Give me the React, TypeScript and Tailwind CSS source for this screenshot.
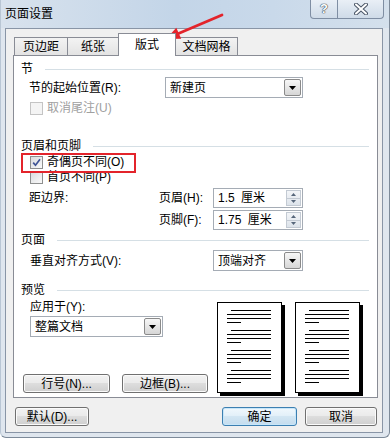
import React from 'react';

const Tri = () => (
  <svg width="7" height="4" viewBox="0 0 7 4">
    <path d="M0 0h7L3.5 4z" fill="#000" />
  </svg>
);

function Select({ value, className }: { value: string; className: string }) {
  return (
    <div className={`flex h-[21px] items-center border border-[#a5acb5] bg-white pl-[4px] pr-[1px] ${className}`}>
      <span className="flex-1 leading-[14px]">{value}</span>
      <span className="flex h-[17px] w-[17px] items-center justify-center rounded-[2px] border border-[#8a8a8a] bg-[linear-gradient(#f7f7f7,#d6d6d6)]">
        <Tri />
      </span>
    </div>
  );
}

function Spin({ value }: { value: string }) {
  return (
    <div className="flex h-[20px] w-[90px] items-center border border-[#a5acb5] bg-white pl-[4px] pr-[1px]">
      <span className="flex-1 leading-[14px] [word-spacing:3px]">{value}</span>
      <span className="flex h-[16px] w-[15px] flex-col border border-[#c3cad3] bg-[linear-gradient(#f3f5f8,#dde3ea)]">
        <span className="flex flex-1 items-center justify-center border-b border-[#c3cad3]">
          <svg width="5" height="3" viewBox="0 0 5 3"><path d="M0 3h5L2.5 0z" fill="#56667a" /></svg>
        </span>
        <span className="flex flex-1 items-center justify-center">
          <svg width="5" height="3" viewBox="0 0 5 3"><path d="M0 0h5L2.5 3z" fill="#56667a" /></svg>
        </span>
      </span>
    </div>
  );
}

function Btn({ children, className, primary }: { children: React.ReactNode; className: string; primary?: boolean }) {
  return (
    <div
      className={`flex h-[19px] items-center justify-center rounded-[3px] border leading-[14px] ${
        primary
          ? 'border-[#3c7fb1] bg-[linear-gradient(#f1f8fd_0%,#e3f0f9_45%,#d3e6f3_50%,#c4dcee_100%)] shadow-[inset_0_0_0_1px_#c7e6f9]'
          : 'border-[#707070] bg-[linear-gradient(#f2f2f2_0%,#ebebeb_45%,#dddddd_50%,#cfcfcf_100%)] shadow-[inset_0_0_0_1px_#fbfbfb]'
      } ${className}`}
    >
      {children}
    </div>
  );
}

function Box({ checked, disabled }: { checked?: boolean; disabled?: boolean }) {
  return (
    <span
      className={`flex h-[13px] w-[13px] shrink-0 items-center justify-center border ${
        disabled ? 'border-[#c4c4c4] bg-[#f4f4f4]' : 'border-[#8e8f8f] bg-[linear-gradient(135deg,#d9dbde,#fafafa)]'
      }`}
    >
      {checked && (
        <svg width="9" height="9" viewBox="0 0 9 9">
          <path d="M1.2 4.6l2.3 2.6L8 1.2" stroke="#3f5496" strokeWidth="1.7" fill="none" />
        </svg>
      )}
    </span>
  );
}

function Head({ label, labelClass, className }: { label: string; labelClass: string; className: string }) {
  return (
    <div className={`flex h-[14px] items-center pl-[7px] pr-[8px] ${className}`}>
      <span className={`leading-[14px] ${labelClass}`}>{label}</span>
      <span className="h-px flex-1 bg-[#d5dfe5]" />
    </div>
  );
}

function Page() {
  return (
    <div className="h-[91px] w-[65px] border border-black bg-white shadow-[3px_3px_0_#000]">
      <svg width="63" height="89" viewBox="0 0 63 89">
        {[0, 1, 2, 3].map((g) => (
          <g key={g} fill="#000">
            <rect x={13} y={7 + g * 20} width={40} height={1} />
            <rect x={9} y={11 + g * 20} width={44} height={1} />
            <rect x={9} y={15 + g * 20} width={44} height={1} />
            <rect x={9} y={19 + g * 20} width={14} height={1} />
          </g>
        ))}
      </svg>
    </div>
  );
}

export default function App() {
  return (
    <div className="relative h-[440px] w-[392px] bg-white font-['Liberation_Sans','Noto_Sans_CJK_SC',sans-serif] text-[12px] text-black">
      <div className="flex h-[438px] w-[390px] flex-col rounded-b-[6px] border border-t-0 border-[#7d8a99] border-l-[#b9c6d4] bg-[#dfe6ee]">
        {/* title bar */}
        <div className="flex h-[28px] bg-[linear-gradient(90deg,#d8e2ed_0%,#c3d5e8_45%,#c9d9ea_70%,#d4e0ec_100%)]">
          <span className="ml-[4px] mt-[7px] leading-[14px]">页面设置</span>
          <div className="ml-auto mr-[5px] flex self-start">
            <div className="flex h-[19px] w-[28px] items-center justify-center rounded-bl-[4px] border border-t-0 border-[#7f8ea3] bg-[linear-gradient(#e9eff6,#cfdbe8)] text-[13px] font-bold text-white [text-shadow:0_0_1px_#34404f,0_0_1px_#34404f,0_0_1px_#34404f]">
              ?
            </div>
            <div className="flex h-[19px] w-[46px] items-center justify-center rounded-br-[4px] border border-l-0 border-t-0 border-[#7f8ea3] bg-[linear-gradient(#e9eff6,#cfdbe8)]">
              <svg width="14" height="12" viewBox="0 0 14 12">
                <path d="M2 1.5L12 10.5M12 1.5L2 10.5" stroke="#4a5566" strokeWidth="4" strokeLinecap="round" />
                <path d="M2 1.5L12 10.5M12 1.5L2 10.5" stroke="#fff" strokeWidth="2" strokeLinecap="round" />
              </svg>
            </div>
          </div>
        </div>

        {/* client area */}
        <div className="ml-[4px] flex h-[405px] w-[378px] flex-col border border-[#8995a6] bg-[#f0f0f0]">
          {/* tabs */}
          <div className="ml-[7px] mt-[4px] flex h-[22px] items-end">
            <div className="ml-[1px] flex h-[18px] w-[54px] items-center justify-center border border-b-0 border-[#898c95] bg-[linear-gradient(#f3f3f3,#e3e3e3)] leading-[14px]">
              页边距
            </div>
            <div className="-ml-px flex h-[18px] w-[52px] items-center justify-center border border-b-0 border-[#898c95] bg-[linear-gradient(#f3f3f3,#e3e3e3)] leading-[14px]">
              纸张
            </div>
            <div className="relative z-10 -mb-px -ml-px flex h-[23px] w-[58px] items-center justify-center border border-b-0 border-[#898c95] bg-white leading-[14px]">
              版式
            </div>
            <div className="-ml-px flex h-[18px] w-[63px] items-center justify-center border border-b-0 border-[#898c95] bg-[linear-gradient(#f3f3f3,#e3e3e3)] leading-[14px]">
              文档网格
            </div>
          </div>

          {/* tab panel */}
          <div className="ml-[7px] flex h-[343px] w-[365px] flex-col border border-[#898c95] bg-white">
            <Head label="节" labelClass="w-[24px]" className="mt-[6px]" />
            <div className="mt-[1px] flex h-[21px] items-center pl-[15px]">
              <span className="w-[136px] leading-[14px]">节的起始位置(R):</span>
              <Select value="新建页" className="w-[138px]" />
            </div>
            <div className="mt-[3px] flex h-[14px] items-center gap-[4px] pl-[16px] text-[#a0a0a0]">
              <Box disabled />
              <span className="leading-[14px]">取消尾注(U)</span>
            </div>

            <Head label="页眉和页脚" labelClass="w-[72px]" className="mt-[24px]" />
            <div className="relative mt-[2px] flex h-[14px] items-center gap-[4px] pl-[16px]">
              <Box checked />
              <span className="leading-[14px]">奇偶页不同(O)</span>
              <span className="absolute left-[7px] top-[-2px] h-[20px] w-[115px] border-2 border-[#e3242b]" />
            </div>
            <div className="mt-[1px] flex h-[14px] items-center gap-[4px] pl-[16px]">
              <Box />
              <span className="leading-[14px]">首页不同(P)</span>
            </div>
            <div className="mt-[4px] flex h-[20px] items-center pl-[15px]">
              <span className="w-[129px] leading-[14px]">距边界:</span>
              <span className="w-[55px] pl-[1px] leading-[14px]">页眉(H):</span>
              <Spin value="1.5 厘米" />
            </div>
            <div className="mt-[2px] flex h-[20px] items-center pl-[144px]">
              <span className="w-[55px] pl-[1px] leading-[14px]">页脚(F):</span>
              <Spin value="1.75 厘米" />
            </div>

            <Head label="页面" labelClass="w-[36px]" className="mt-[3px]" />
            <div className="mt-[3px] flex h-[21px] items-center pl-[16px]">
              <span className="w-[183px] leading-[14px]">垂直对齐方式(V):</span>
              <Select value="顶端对齐" className="w-[90px]" />
            </div>

            <Head label="预览" labelClass="w-[36px]" className="mt-[12px]" />
            <div className="flex flex-1">
              <div className="flex w-[203px] flex-col">
                <span className="ml-[16px] mt-[3px] h-[14px] leading-[14px]">应用于(Y):</span>
                <Select value="整篇文档" className="ml-[16px] mt-[2px] w-[133px]" />
                <div className="mb-[4px] ml-[9px] mt-auto flex gap-[12px]">
                  <Btn className="w-[87px]">行号(N)...</Btn>
                  <Btn className="w-[86px]">边框(B)...</Btn>
                </div>
              </div>
              <div className="mt-[5px] flex gap-[13px]">
                <Page />
                <Page />
              </div>
            </div>
          </div>

          {/* dialog buttons */}
          <div className="mt-[9px] flex pl-[9px]">
            <Btn className="w-[74px]">默认(D)...</Btn>
            <Btn primary className="ml-[133px] w-[75px]">确定</Btn>
            <Btn className="ml-[8px] w-[72px]">取消</Btn>
          </div>
        </div>
      </div>

      {/* annotation arrow */}
      <svg className="pointer-events-none absolute left-0 top-0" width="392" height="440" viewBox="0 0 392 440">
        <line x1="222" y1="15" x2="178.5" y2="33.5" stroke="#e3242b" strokeWidth="2.8" strokeLinecap="round" />
        <path d="M166 39L176.3 27.8L181.2 38.7Z" fill="#e3242b" />
      </svg>
    </div>
  );
}
